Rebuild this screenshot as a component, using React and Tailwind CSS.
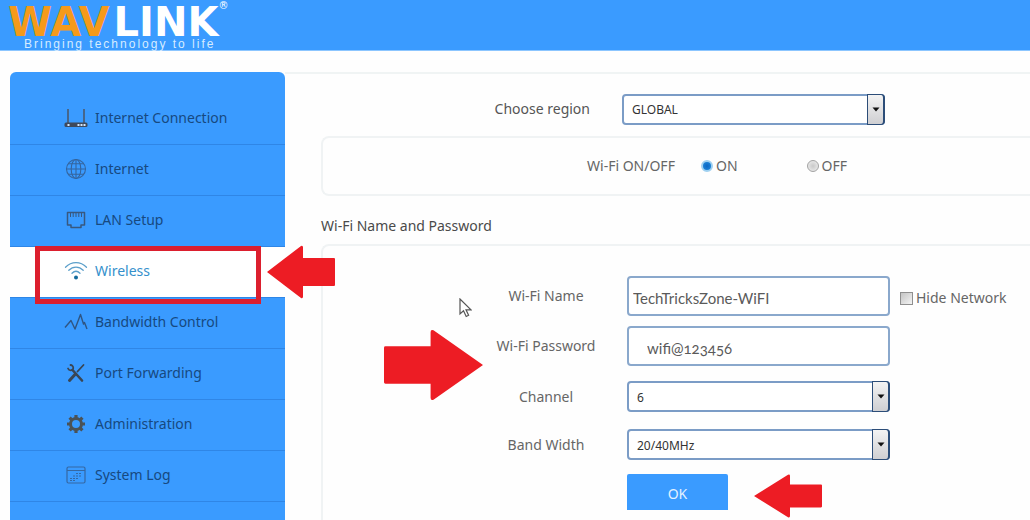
import { useState } from 'react';

const RouterIcon = () => (
  <svg viewBox="0 0 24 20" className="w-6 h-5" fill="none">
    <path d="M4 1v14M20 1v14" stroke="#4a5a70" strokeWidth="1.6" />
    <rect x="0.5" y="14.5" width="23" height="4.5" rx="1.5" fill="#3f4a5c" />
    <path d="M3.500 17h2M13.500 17h2M16.500 17h2M19.500 17h2" stroke="#d5e6fb" strokeWidth="2" />
  </svg>
);

const GlobeIcon = () => (
  <svg viewBox="0 0 22 22" className="w-[22px] h-[22px]" fill="none" stroke="#35659e" strokeWidth="1.1">
    <circle cx="11" cy="11" r="9.500" />
    <ellipse cx="11" cy="11" rx="4.800" ry="9.500" />
    <path d="M1.500 11h19M11 1.500v19M3.200 5.800h15.600M3.200 16.200h15.600" />
  </svg>
);

const LanIcon = () => (
  <svg viewBox="0 0 20 18" className="w-5 h-[18px]" fill="none" stroke="#38587f" strokeWidth="1.5">
    <path d="M1.500 1.500h17v12.500h-3.500v2.500h-10v-2.500h-3.500z" strokeLinejoin="round" />
    <path d="M4.500 2v4M7.200 2v4M10 2v4M12.800 2v4M15.500 2v4" strokeWidth="1" />
  </svg>
);

const WifiIcon = () => (
  <svg viewBox="0 0 24 20" className="w-6 h-5" fill="none" stroke="#5b9fca" strokeWidth="1.3" strokeLinecap="round">
    <path d="M1.500 6.200C7.500 0.200 16.500 0.200 22.500 6.200" />
    <path d="M4.800 9.300C9 5 15 5 19.200 9.300" />
    <path d="M8 12.200C10.400 9.800 13.600 9.800 16 12.200" />
    <circle cx="12" cy="16.500" r="2" fill="#136a9c" stroke="none" />
  </svg>
);

const BandwidthIcon = () => (
  <svg viewBox="0 0 24 18" className="w-6 h-[18px]" fill="none" stroke="#2f5583" strokeWidth="1.4" strokeLinejoin="round">
    <path d="M1 14.500L7 7.500L11 16L16.500 1.500L19.500 11L20.500 9.500L23 16" />
  </svg>
);

const ToolsIcon = () => (
  <svg viewBox="0 0 20 20" className="w-5 h-5" fill="none" stroke="#3a4654" strokeLinecap="round">
    <path d="M6.500 7L16 17.500" strokeWidth="2.600" />
    <path d="M2 5.500C3 8 6.500 8 7.200 5.500C7.600 3.500 6 2 4.500 2" strokeWidth="1.800" />
    <path d="M17.500 2L11.500 8.500" strokeWidth="1.800" />
    <path d="M9 11.500L3.500 17.500" strokeWidth="3" />
  </svg>
);

const GearIcon = () => (
  <svg viewBox="0 0 20 20" className="w-5 h-5" fill="none" stroke="#4a5257">
    <circle cx="10" cy="10" r="5.500" strokeWidth="3" />
    <g strokeWidth="3.200">
      <path d="M10 1v3M10 16v3M1 10h3M16 10h3" />
      <path d="M3.600 3.600l2.200 2.200M14.200 14.200l2.200 2.200M3.600 16.400l2.200-2.200M14.200 5.800l2.200-2.200" />
    </g>
  </svg>
);

const LogIcon = () => (
  <svg viewBox="0 0 20 18" className="w-5 h-[18px]" fill="none" stroke="#3568a3">
    <rect x="1" y="1" width="18" height="16" rx="1.500" strokeWidth="1.200" />
    <path d="M1 4.500h18" />
    <path d="M10 7.500h6M7 10h9M4 12.500h9M4 14.500h6" strokeDasharray="2 1" />
  </svg>
);

const MENU = [
  { label: 'Internet Connection', icon: RouterIcon },
  { label: 'Internet', icon: GlobeIcon },
  { label: 'LAN Setup', icon: LanIcon },
  { label: 'Wireless', icon: WifiIcon, active: true },
  { label: 'Bandwidth Control', icon: BandwidthIcon },
  { label: 'Port Forwarding', icon: ToolsIcon },
  { label: 'Administration', icon: GearIcon },
  { label: 'System Log', icon: LogIcon },
];

function RedArrow({ className }) {
  return (
    <svg viewBox="0 0 68 54" preserveAspectRatio="none" className={className}>
      <path
        d="M0 27L34 1Q36 0 36 2.500V13H67Q68 13 68 14V40Q68 41 67 41H36V51.500Q36 54 34 53Z"
        fill="#ed1c24"
      />
    </svg>
  );
}

function Select({ id, options }) {
  return (
    <div className="relative w-[263px]">
      <select
        id={id}
        className="block w-full h-[31px] pt-0.5 pl-2 pr-6 appearance-none bg-white border-2 border-[#7b9cc6] rounded text-xs text-[#333]"
      >
        {options.map((o) => (
          <option key={o}>{o}</option>
        ))}
      </select>
      <span className="absolute right-0 inset-y-0 w-[18px] flex items-center justify-center border border-r-2 border-[#2c4d78] rounded-r bg-linear-to-b from-[#f3f3f3] to-[#cfcfd2] pointer-events-none">
        <svg viewBox="0 0 8 5" className="w-2 h-[5px]">
          <path d="M0.500 0.500h7L4 4.500z" fill="#111" />
        </svg>
      </span>
    </div>
  );
}

function Radio({ label, checked, onChange }) {
  return (
    <label className="flex items-center gap-[3px]">
      <input
        type="radio"
        name="wifi"
        checked={checked}
        onChange={onChange}
        className="w-3 h-3 appearance-none rounded-full border border-[#a3a3a3] bg-radial from-[#c9c9c9] to-[#f2f2f2] checked:border-2 checked:border-[#9fd0f0] checked:from-[#0a66c2] checked:to-[#1f8be0]"
      />
      {label}
    </label>
  );
}

function Field({ id, label, children }) {
  return (
    <div className="flex items-center">
      <label htmlFor={id} className="w-[162px] text-center">
        {label}
      </label>
      {children}
    </div>
  );
}

const inputClass =
  "w-[263px] h-10 pt-1 border-2 border-[#8aa8cc] rounded bg-white font-['Lato',sans-serif] text-[15px] oldstyle-nums text-[#5a5a5a]";

export default function App() {
  const [on, setOn] = useState(true);
  const [name, setName] = useState('TechTricksZone-WiFI');
  const [password, setPassword] = useState('wifi@123456');

  return (
    <div className="min-h-screen flex flex-col bg-[#fefefe] font-['Noto_Sans',sans-serif] text-sm text-[#666] overflow-x-hidden">
      <header className="h-[51px] bg-[#3a9bff] border-b border-[#8cc6ff] pl-2">
        <div className="flex items-start h-9 pt-1 font-['DejaVu_Sans',sans-serif] font-bold text-[40px] leading-9">
          <span className="text-[#f59a1b]">WAV</span>
          <span className="ml-1 text-white">LINK</span>
          <span className="-mt-1 text-[10px] leading-3 font-normal text-white">®</span>
        </div>
        <p className="pl-4 font-['Liberation_Sans',sans-serif] text-xs leading-4 tracking-[2px] text-[#d6ecff] whitespace-nowrap">
          Bringing technology to life
        </p>
      </header>

      <div className="flex-1 flex pl-[10px] pt-[21px]">
        <nav className="w-[275px] shrink-0 pt-[22px] bg-[#3a9bff] rounded-t-md">
          <ul>
            {MENU.map(({ label, icon: Icon, active }) => (
              <li
                key={label}
                className={`relative h-[51px] border-b border-[#2f86e6] ${
                  active ? 'bg-white text-[#3590cc]' : 'text-[#17497f]'
                }`}
              >
                <a href="#" className="flex items-center h-12 pl-[54px]">
                  <span className="w-6 mr-[7px] flex justify-center">
                    <Icon />
                  </span>
                  {label}
                </a>
                {active && (
                  <>
                    <div className="absolute z-10 left-[25px] -top-px w-[226px] h-[58px] border-5 border-[#dc1f2e]" />
                    <RedArrow className="absolute z-10 left-[257px] -top-0.5 w-[68px] h-[54px]" />
                  </>
                )}
              </li>
            ))}
          </ul>
        </nav>

        <main className="flex-1 min-w-0 flex flex-col pl-9 border-t-2 border-[#f0f4f4]">
          <div className="flex items-center gap-8 h-[30px] mt-5 pl-[170px] text-[#555]">
            <label htmlFor="region" className="w-[99px] text-right whitespace-nowrap">
              Choose region
            </label>
            <Select id="region" options={['GLOBAL']} />
          </div>

          <div
            role="radiogroup"
            aria-labelledby="wifi-switch"
            className="flex items-center h-[60px] mt-3 pl-[264px] border-2 border-r-0 border-[#f0f3f4] rounded-l-lg"
          >
            <span id="wifi-switch" className="w-[114px] whitespace-nowrap">
              Wi-Fi ON/OFF
            </span>
            <div className="flex gap-[69px]">
              <Radio label="ON" checked={on} onChange={() => setOn(true)} />
              <Radio label="OFF" checked={!on} onChange={() => setOn(false)} />
            </div>
          </div>

          <h2 className="mt-5 leading-5 text-[#4a4a4a]">Wi-Fi Name and Password</h2>

          <form
            onSubmit={(e) => e.preventDefault()}
            className="relative flex-1 mt-2 pt-[30px] pl-[142px] border-2 border-r-0 border-b-0 border-[#f0f3f4] rounded-tl-lg"
          >
            <div className="flex items-center gap-[10px]">
              <Field id="ssid" label="Wi-Fi Name">
                <input
                  id="ssid"
                  value={name}
                  onChange={(e) => setName(e.target.value)}
                  className={`${inputClass} pl-1`}
                />
              </Field>
              <label className="flex items-center gap-[3px] pt-1 whitespace-nowrap">
                <input
                  type="checkbox"
                  className="w-[13px] h-[13px] appearance-none border border-[#8f8f8f] bg-linear-to-br from-[#c4c4c4] to-[#f4f4f4]"
                />
                Hide Network
              </label>
            </div>
            <div className="mt-2.5">
              <Field id="password" label="Wi-Fi Password">
                <input
                  id="password"
                  value={password}
                  onChange={(e) => setPassword(e.target.value)}
                  className={`${inputClass} pl-[18px]`}
                />
              </Field>
            </div>
            <div className="mt-[15px]">
              <Field id="channel" label="Channel">
                <Select id="channel" options={['6', '1', '11']} />
              </Field>
            </div>
            <div className="mt-[17px]">
              <Field id="bandwidth" label="Band Width">
                <Select id="bandwidth" options={['20/40MHz', '20MHz']} />
              </Field>
            </div>
            <div className="flex items-start gap-[26px] mt-[14px] pl-[162px]">
              <button type="submit" className="w-[101px] h-9 pt-1 bg-[#3a9bff] rounded-t-xs text-[#e3f1ff]">
                OK
              </button>
              <RedArrow className="w-[68px] h-11" />
            </div>

            <svg viewBox="0 0 13 20" className="absolute left-[136px] top-[52px] w-[13px] h-5">
              <path
                d="M1 1V16L4.500 12.800L7.200 18.500L9.600 17.300L7 11.800H12Z"
                fill="#fff"
                stroke="#555"
                strokeWidth="1.200"
              />
            </svg>
            <RedArrow className="absolute left-[61px] top-[83px] w-[99px] h-[72px] rotate-180" />
          </form>
        </main>
      </div>
    </div>
  );
}
